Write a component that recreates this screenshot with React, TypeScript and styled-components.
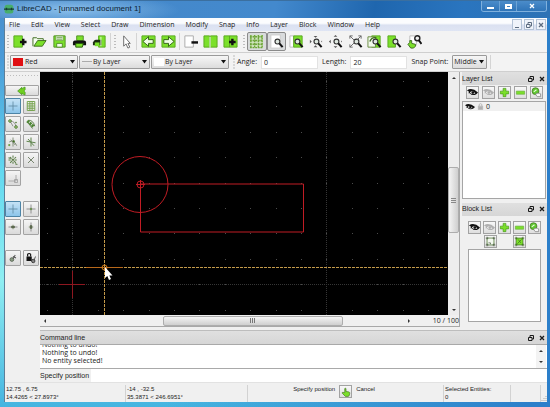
import React from "react";
import styled, { createGlobalStyle, css } from "styled-components";

const GREEN = "#7be02a";
const DARK = "#3d6b1e";
const INK = "#1b1b1b";

const GlobalStyle = createGlobalStyle`
  *, *::before, *::after { box-sizing: border-box; }
  body { margin: 0; }
  button, input, select { font: inherit; color: inherit; margin: 0; padding: 0; }
`;

const Frame = styled.div`
  display: grid;
  grid-template-rows: 18px minmax(0, 1fr);
  min-height: 100vh;
  height: 100vh;
  padding: 0 3px 5px 4px;
  font: 7px/8px "Open Sans", "Noto Sans", sans-serif;
  color: #222;
  background:
    linear-gradient(90deg, transparent 30%, #2c7fca 96%),
    linear-gradient(180deg, #4a8cca 0, #4a9bd8 60px, #62d8f0 170px, #8feef2 280px, #45b4e0 100%);
`;

const TitleBar = styled.header`
  display: flex;
  align-items: stretch;
  margin: 0 -3px 0 -4px;
  padding: 0 3px 0 4px;
  background:
    radial-gradient(ellipse 110px 16px at 70px 9px, rgba(150, 200, 240, 0.85), transparent),
    linear-gradient(100deg, #4688c8 0%, #4389cd 50%, #1f66ae 68%, #2a75bf 84%, #2d72b5 100%);
  border-top: 1px solid #3b6f9f;
`;

const Title = styled.h1`
  display: flex;
  align-items: center;
  gap: 3px;
  flex: 1;
  margin: 0;
  font: 8px/12px "Liberation Sans", Arial, sans-serif;
  color: #0b1c30;
  padding-bottom: 2px;
`;

const CaptionGroup = styled.div`
  display: flex;
  height: 11px;
  border: 1px solid #7fb0dd;
  border-top: 0;
  border-radius: 0 0 3px 3px;
  overflow: hidden;
`;

const CaptionButton = styled.button<{ $wide?: boolean }>`
  display: grid;
  place-items: center;
  width: ${(p) => (p.$wide ? 30 : 17)}px;
  border: 0;
  border-left: 1px solid #6ea4d6;
  background: linear-gradient(#4b8cca, #2f74b8);
  &:first-child { border-left: 0; }
`;

const Body = styled.div`
  display: flex;
  flex-direction: column;
  min-height: 0;
  background: #f0f0f0;
  border-left: 1px solid #5d7f99;
`;

const MenuBar = styled.nav`
  display: flex;
  align-items: center;
  gap: 11px;
  flex: none;
  height: 13px;
  padding: 0 1px 0 4px;
  background: linear-gradient(#fbfcfe 0 40%, #dbe1f1 55%, #dfe5f4);
`;

const MenuLink = styled.a`
  color: #1c1c1c;
  text-decoration: none;
`;

const MdiButtons = styled.div`
  display: flex;
  gap: 2px;
  margin-left: auto;
`;

const MdiButton = styled.button`
  display: grid;
  place-items: center;
  width: 10px;
  height: 11px;
  border: 1px solid #b4c3d6;
  background: #eff3fa;
`;

const ToolBar = styled.div<{ $tall?: boolean }>`
  display: flex;
  align-items: center;
  flex: none;
  height: ${(p) => (p.$tall ? 22 : 19)}px;
  background: #f3f3f3;
  border-bottom: 1px solid #cfcfcf;
`;

const Handle = styled.span<{ $wide?: boolean }>`
  flex: none;
  align-self: stretch;
  width: ${(p) => (p.$wide ? 7 : 5)}px;
  margin: 2px 0;
  background: radial-gradient(circle, #bdbdbd 0 1px, transparent 1px) center / 2px 3px repeat-y;
`;

const Rule = styled.span`
  flex: none;
  align-self: stretch;
  width: 1px;
  margin: 2px 1px;
  background: #d4d4d4;
`;

const ToolGroup = styled.div<{ $w: number }>`
  display: flex;
  flex: 0 1 ${(p) => p.$w}px;
`;

const ToolButton = styled.button<{ $on?: boolean }>`
  display: grid;
  place-items: center;
  flex: 1;
  height: 19px;
  border: 1px solid transparent;
  background: transparent;
  ${(p) =>
    p.$on &&
    css`
      border-color: #8b8b8b;
      border-radius: 2px;
      background: #d9dbdc;
    `}
`;

const Picker = styled.div<{ $w: number }>`
  position: relative;
  flex: 0 1 ${(p) => p.$w}px;
  height: 14px;
  margin-right: 1px;
`;

const PickerSelect = styled.select<{ $indent: number }>`
  appearance: none;
  width: 100%;
  height: 100%;
  padding: 0 9px 1px ${(p) => p.$indent}px;
  border: 1px solid #9a9a9a;
  border-radius: 1px;
  background: linear-gradient(#f6f6f6, #e9e9e9 50%, #dcdcdc);
`;

const PickerArrow = styled.svg`
  position: absolute;
  right: 3px;
  top: 5px;
  pointer-events: none;
`;

const Swatch = styled.span<{ $c: string; $line?: boolean }>`
  position: absolute;
  left: 3px;
  top: ${(p) => (p.$line ? 6 : 3)}px;
  width: 10px;
  height: ${(p) => (p.$line ? 1 : 8)}px;
  background: ${(p) => p.$c};
  pointer-events: none;
`;

const Field = styled.label<{ $gap: number }>`
  display: flex;
  align-items: center;
  gap: ${(p) => p.$gap}px;
  margin-right: 4px;
  white-space: nowrap;
  &:last-of-type { margin-right: 1px; }
`;

const NumberBox = styled.input`
  width: 57px;
  height: 13px;
  padding: 0 2px;
  border: 1px solid #e2e2e2;
  background: #fff;
`;

const Work = styled.div`
  display: flex;
  flex: 1;
  min-height: 0;
`;

const SideBar = styled.aside`
  flex: none;
  width: 35px;
  padding: 2px 1px 0 0;
`;

const SideHandle = styled.div`
  height: 3px;
  margin: 0 1px 8px 2px;
  background: radial-gradient(circle, #bdbdbd 0 1px, transparent 1px) center / 3px 3px repeat-x;
`;

const SideGrid = styled.div`
  display: grid;
  grid-template-columns: 16px 16px;
  gap: 2px;
  margin-bottom: 15px;
`;

const SideButton = styled.button<{ $on?: boolean; $back?: boolean }>`
  display: grid;
  place-items: center;
  height: ${(p) => (p.$back ? 11 : 16)}px;
  grid-column: ${(p) => (p.$back ? "1 / 3" : "auto")};
  border: 1px solid ${(p) => (p.$on ? "#4d84a6" : "#a3a3a3")};
  border-radius: 1px;
  background: ${(p) =>
    p.$on ? "linear-gradient(#c5e2f5, #8cc5ea)" : "linear-gradient(#f5f5f5, #dadada)"};
`;

const Center = styled.div`
  display: flex;
  flex-direction: column;
  flex: 1;
  min-width: 0;
`;

const Upper = styled.div`
  display: flex;
  flex: 1;
  min-height: 0;
`;

const DrawingPane = styled.section`
  display: grid;
  grid-template: minmax(0, 1fr) 11px / minmax(0, 1fr) 11px;
  flex: 1;
  min-width: 0;
  margin-bottom: 3px;
  border-right: 1px solid #a8a8a8;
  border-bottom: 1px solid #a8a8a8;
`;

const Drawing = styled.svg`
  display: block;
  width: 100%;
  height: 100%;
  background: #000;
`;

const VScroll = styled.div`
  display: grid;
  grid-template-rows: 11px 1fr 11px;
  background: #ededed;
  justify-items: center;
  align-items: center;
`;

const VTrack = styled.div`
  display: grid;
  grid-template-rows: 84fr 66fr 71fr;
  width: 100%;
  height: 100%;
`;

const Thumb = styled.div<{ $row?: boolean }>`
  display: grid;
  place-items: center;
  ${(p) => (p.$row ? "grid-column: 2;" : "grid-row: 2;")}
  border: 1px solid #adadad;
  border-radius: 2px;
  background: linear-gradient(${(p) => (p.$row ? "180deg" : "90deg")}, #f4f4f4, #cfcfcf);
`;

const BottomScroll = styled.div`
  display: flex;
  align-items: center;
  grid-column: 1 / 3;
  padding-left: 2px;
  background: #f0f0f0;
`;

const HTrack = styled.div`
  display: grid;
  grid-template-columns: 114fr 181fr 63fr;
  flex: 1;
  height: 10px;
  margin-left: 2px;
`;

const GridStatus = styled.output`
  margin-left: 21px;
`;

const Docks = styled.div`
  display: flex;
  flex-direction: column;
  flex: none;
  width: 87px;
  padding-left: 2px;
`;

const Dock = styled.section<{ $grow: number }>`
  display: flex;
  flex-direction: column;
  flex: ${(p) => p.$grow} 1 0;
  min-height: 0;
  margin-bottom: 4px;
`;

const DockTitle = styled.h2`
  display: flex;
  align-items: center;
  gap: 2px;
  flex: none;
  height: 13px;
  margin: 0;
  padding: 0 1px 0 0;
  font: 7px/8px "Liberation Sans", Arial, sans-serif;
  background: linear-gradient(#e0e0e0, #d6d6d6);
`;

const DockName = styled.span`
  flex: 1;
`;

const DockControl = styled.button`
  display: grid;
  place-items: center;
  width: 9px;
  height: 10px;
  border: 0;
  background: none;
`;

const IconRow = styled.div<{ $gap: number; $top: number }>`
  display: flex;
  justify-content: center;
  flex: none;
  gap: ${(p) => p.$gap}px;
  padding-top: ${(p) => p.$top}px;
`;

const SmallButton = styled.button`
  display: grid;
  place-items: center;
  width: 13px;
  height: 13px;
  border: 1px solid #a2a2a2;
  background: linear-gradient(#f8f8f8, #dedede);
`;

const ListBox = styled.ul<{ $inset?: boolean }>`
  flex: 1;
  margin: ${(p) => (p.$inset ? "1px 6px 4px 6px" : "2px 1px 0 0")};
  padding: 0;
  list-style: none;
  background: #fff;
  border: 1px solid #a5a5a5;
`;

const LayerRow = styled.li`
  display: flex;
  align-items: center;
  gap: 2px;
  height: 9px;
  padding-left: 2px;
  background: #f0f0f0;
`;

const CommandDock = styled.section`
  flex: none;
  border-top: 1px solid #bdbdbd;
`;

const Log = styled.div`
  display: flex;
  align-items: flex-end;
  height: 25px;
  overflow: hidden;
  background: #fff;
  border-top: 1px solid #a9a9a9;
  border-bottom: 1px solid #a9a9a9;
`;

const LogLines = styled.div`
  flex: 1;
  padding: 0 2px 3px;
`;

const LogScroll = styled.div`
  display: flex;
  flex-direction: column;
  justify-content: space-around;
  align-items: center;
  align-self: stretch;
  width: 10px;
  margin-right: 1px;
  background: #f3f3f3;
`;

const Prompt = styled.label`
  display: flex;
  align-items: center;
  height: 13px;
  font: 7px/8px "Liberation Sans", Arial, sans-serif;
`;

const PromptText = styled.span`
  flex: none;
  width: 51px;
  white-space: nowrap;
`;

const CommandInput = styled.input`
  flex: 1;
  min-width: 0;
  height: 13px;
  border: 0;
  background: #fff;
`;

const StatusBar = styled.footer`
  display: flex;
  flex: none;
  height: 20px;
  padding-top: 2px;
  border-top: 1px solid #e2e2e2;
  font: 6px/8px "Liberation Sans", Arial, sans-serif;
`;

const StatusCell = styled.div<{ $w: number; $grow?: boolean }>`
  flex: ${(p) => (p.$grow ? 1 : 0)} 1 ${(p) => p.$w}px;
  padding-left: 1px;
  border-right: 1px solid #d2d2d2;
  white-space: nowrap;
`;

const MouseHints = styled(StatusCell)`
  display: flex;
  justify-content: center;
  gap: 4px;
  padding-right: 24px;
`;

const Grip = styled.svg`
  align-self: flex-end;
  margin-left: auto;
`;

type IconName =
  | "new" | "open" | "save" | "print" | "preview" | "pointer" | "undo" | "redo"
  | "cut" | "copy" | "paste" | "grid" | "draft" | "redraw" | "zoomIn" | "zoomOut"
  | "zoomAuto" | "zoomPrev" | "zoomWin" | "pan" | "back" | "free" | "snapGrid"
  | "ends" | "onEntity" | "centerPt" | "middle" | "dist" | "cross" | "corner"
  | "ortho" | "horiz" | "vert" | "relZero" | "lockZero" | "eye" | "eyeOff" | "plus"
  | "minus" | "edit" | "insert" | "lock" | "hand" | "blockEdit" | "logo";

const page = (x: number, w = 9) => (
  <path d={`M${x} 2h${w}v12h-${w}z`} fill={GREEN} stroke="#59a81e" strokeWidth="1" />
);
const lens = (
  <>
    <circle cx="9" cy="8" r="2.6" fill="#dfe8e0" stroke="#333" strokeWidth="1.2" />
    <path d="M11 10l3.5 4" stroke="#111" strokeWidth="2.2" />
  </>
);
const eyeShape = (c: string) => (
  <>
    <path d="M0 5Q7 0 16 8L14 10Q8 14 4 9L2 9L3 7Z" fill={c} />
    <path d="M4 8Q8 4 12 9Q8 12 4 8Z" fill="#eee" />
    <circle cx="8.500" cy="8" r="2" fill={c} />
  </>
);
const handShape = (
  <path
    d="M6 9V2.500q1-1 2 0V7l5 1q1 .5 1 2l-1 4q-1 1-2 1H7L2 10q-.5-1.500 1-1.500z"
    fill={GREEN}
    stroke={DARK}
    strokeWidth="1"
  />
);

const drawings: Record<IconName, React.ReactNode> = {
  logo: (
    <>
      <rect x="1" y="1" width="14" height="14" rx="4" fill="#48ae6b" />
      <path d="M0 8h16M4 6v4M12 6v4" stroke="#173d35" strokeWidth="2" />
    </>
  ),
  new: <>{page(2)}<path d="M12 5v7M8.500 8.500h7" stroke="#111" strokeWidth="2.6" /></>,
  open: (
    <>
      <path d="M1 13V4h4l1 1h6v3" fill="#f6fff0" stroke={DARK} />
      <path d="M2 13l4-6h9l-4 6z" fill={GREEN} stroke={DARK} />
    </>
  ),
  save: (
    <>
      <path d="M2 2h12v12H2z" fill={GREEN} stroke="#4f8f23" />
      <path d="M4 2h8v5H4z" fill="#e8f5df" stroke="#5a9a2c" strokeWidth=".7" />
      <path d="M5 3.500h6M5 5.500h6" stroke="#6d9a50" />
      <path d="M5 10h6v4H5z" fill="#f3faee" stroke="#4f8f23" />
    </>
  ),
  print: (
    <>
      <path d="M5 2h7v5H5z" fill={GREEN} stroke="#4f8f23" />
      <path d="M1 9q0-2 2-2h10q2 0 2 2v3H1z" fill="#111" />
      <path d="M4 10h8l-1 4H4z" fill={GREEN} stroke="#285b0c" />
    </>
  ),
  preview: (
    <>
      {page(7, 7)}
      <path d="M1 9q1-3 3-3h6v6H1z" fill="#1a2b10" />
      <path d="M3 9h5v4H3z" fill={GREEN} />
      <path d="M9.500 3v10" stroke="#eaffdd" />
    </>
  ),
  pointer: <path d="M5 2v11l2.500-2.500L9.500 15l2-1-2-4H12z" fill="#fff" stroke="#666" />,
  undo: (
    <>
      {page(1, 7)}{page(8, 7)}
      <path d="M2 8l6-5v3h5v4H8v3z" fill="#efffe5" stroke="#325f18" />
    </>
  ),
  redo: (
    <>
      {page(1, 7)}{page(8, 7)}
      <path d="M14 8L8 3v3H3v4h5v3z" fill="#efffe5" stroke="#325f18" />
    </>
  ),
  cut: (
    <>
      <path d="M2 2h9v12H2z" fill="#fff" stroke="#aaa" />
      <path d="M9 9h7" stroke="#111" strokeWidth="2.600" />
    </>
  ),
  copy: (
    <>
      {page(1, 6)}{page(8, 7)}
      <path d="M7.500 3v11" stroke="#eaffdd" strokeWidth="1.200" />
    </>
  ),
  paste: <>{page(1, 6)}{page(7, 8)}<path d="M10 5v7M6.500 8.500h7" stroke="#111" strokeWidth="2.600" /></>,
  grid: (
    <>
      <path d="M1 1h14v14H1z" fill="#cfe3bd" />
      <path d="M2 1v14M6 1v14M10 1v14M14 1v14M1 3h14M1 7h14M1 11h14M1 14.500h14" stroke="#6ea53a" strokeWidth="1.500" strokeDasharray="2 .8" />
    </>
  ),
  draft: <><path d="M2 1h10v14H2z" fill="#fff" stroke="#ccc" />{lens}</>,
  redraw: <><path d="M1 2h4v12H1z" fill="#fff" stroke="#bbb" />{page(5, 9)}{lens}</>,
  zoomIn: (
    <>
      {lens}
      <path d="M8 4l-2-2h4zM8 12l-2 2h4zM4 8L2 6v4zM14 8l1-1v2z" fill="#555" />
    </>
  ),
  zoomOut: (
    <>
      {lens}
      <path d="M8 1L6 3h4zM8 15l-2-2h4zM1 8l2-2v4zM15 8l-1-1v2z" fill="#555" />
    </>
  ),
  zoomAuto: (
    <>
      {lens}
      <path d="M2 5V2h3M11 2h3v3M2 11v3h3M2 2l5 5M14 2l-4 4M2 14l5-5" stroke="#666" fill="none" />
    </>
  ),
  zoomPrev: (
    <>
      {page(5, 9)}
      <path d="M1 3h8v11H1z" fill="#f2faec" stroke="#66893f" />
      {lens}
      <path d="M3 8q2-5 7-4" stroke={DARK} fill="none" strokeWidth="1.500" />
    </>
  ),
  zoomWin: <>{page(1, 8)}{lens}</>,
  pan: (
    <>
      <path d="M3 2h7v10H3z" fill="#fff" stroke="#bbb" />
      <circle cx="11" cy="4.500" r="2.700" fill="#eee" stroke="#222" strokeWidth="1.500" />
      <path d="M12.500 6.500l3 4" stroke="#111" strokeWidth="2" />
      <path d="M3 9v-2h2v3l4 1v2l-2 2H4l-3-4z" fill={GREEN} stroke={DARK} />
    </>
  ),
  back: (
    <path d="M1 8l7-6v3l3-3h2v4l-2 2 2 2v4h-2l-3-3v3z" fill="#6fd020" stroke="#3f8a18" />
  ),
  free: <path d="M8 2v12M2 8h12" stroke="#58839c" />,
  snapGrid: (
    <path d="M3 2h10v12H3zM6.500 2v12M9.500 2v12M3 5h10M3 8h10M3 11h10" fill="none" stroke="#76a34f" strokeWidth="1.300" />
  ),
  ends: (
    <>
      <path d="M4 4q7 0 8 8M4 4l4 7" fill="none" stroke="#777" />
      <circle cx="4" cy="4" r="1.800" fill="#a9cf86" stroke={DARK} />
      <circle cx="12" cy="12" r="1.800" fill="#a9cf86" stroke={DARK} />
      <circle cx="12" cy="6" r="1" fill={DARK} />
    </>
  ),
  onEntity: (
    <>
      <path d="M5 3q6 0 8 8M3 5l7 9" fill="none" stroke="#5d7d4b" strokeWidth="1.300" />
      <path d="M3 4l5 4 4 4" fill="none" stroke="#4e8634" strokeWidth="4" strokeDasharray="3 1" />
    </>
  ),
  centerPt: (
    <>
      <path d="M8 2v12M3 8q6-4 10 5M5 5l6 7" fill="none" stroke="#7a8873" strokeWidth="1.200" />
      <circle cx="3" cy="12" r="1.500" fill="#6b9e45" />
      <circle cx="9" cy="7" r="1.500" fill={DARK} />
    </>
  ),
  middle: <path d="M8 2v12M2 7l12 2M4 4l8 9" stroke="#5c8249" strokeWidth="1.300" />,
  dist: (
    <path d="M8 2v12M2 8h12M4 4l8 8M12 4l-8 8M2 5l3 1M11 13l3 1" stroke="#5b7d45" strokeWidth="1.400" strokeDasharray="3 1" />
  ),
  cross: <path d="M4 4l8 8M12 4l-8 8M7 8h2" stroke="#74836c" strokeWidth="1.300" />,
  corner: <path d="M2 12h10V4M10 10h4v4h-4z" stroke="#999" fill="none" />,
  ortho: <><path d="M8 2v12M2 8h12" stroke="#777" /><circle cx="8" cy="8" r="1.600" fill="#6f8f58" /></>,
  horiz: <><path d="M2 8h12" stroke="#777" /><path d="M8 5v6M6 7h4v2H6z" stroke="#667754" /></>,
  vert: <><path d="M8 2v12" stroke="#777" /><path d="M5 8h6M7 6h2v4H7z" stroke="#667754" /></>,
  relZero: (
    <>
      <circle cx="6.500" cy="10" r="2.500" fill="#8a9a84" stroke="#4b5a45" />
      <path d="M8 9l3-5M8 6l4 2" stroke="#555" strokeWidth="1.400" />
    </>
  ),
  lockZero: (
    <>
      <path d="M2 6h7v6H2z" fill="#111" />
      <path d="M3.500 6V3q2-2 4 0v3" fill="none" stroke="#111" strokeWidth="1.500" />
      <circle cx="11" cy="12" r="2.300" fill="#888" stroke="#222" />
      <path d="M12 11l2-5" stroke="#333" />
    </>
  ),
  eye: eyeShape("#111"),
  eyeOff: eyeShape("#b0b0b0"),
  plus: <path d="M6 2h4v4h4v4h-4v4H6v-4H2V6h4z" fill={GREEN} stroke="#48981a" />,
  minus: <path d="M2 6h12v4.500H2z" fill={GREEN} stroke="#6caf40" />,
  edit: (
    <>
      <circle cx="6.500" cy="6" r="5" fill="#61c832" stroke={DARK} />
      <path d="M4 7l4-3" stroke="#eaffdd" strokeWidth="1.500" />
      <path d="M8 9h4l2 1v4H9l-2-3z" fill="#f7f7f7" stroke="#777" />
    </>
  ),
  insert: (
    <>
      <path d="M3 3h10v10H3z" fill={GREEN} stroke={DARK} />
      <path d="M1 3h4M3 1v4M11 3h4M13 1v4M1 13h4M3 11v4M11 13h4M13 11v4M5 11l6-6M6 5l4 5" stroke={DARK} />
    </>
  ),
  blockEdit: (
    <>
      <path d="M3 3h10v10H3z" fill="#f4f8f1" stroke={DARK} />
      <path d="M1 3h4M3 1v4M11 3h4M13 1v4M1 13h4M3 11v4M11 13h4M13 11v4M5 10h3v2" stroke="#45553e" fill="none" />
    </>
  ),
  lock: (
    <>
      <path d="M3 7h10v8H3z" fill="#ccc" stroke="#999" />
      <path d="M5 7V3q3-3 6 0v4M4 10h8M4 12.500h8" fill="none" stroke="#999" strokeWidth="1.300" />
    </>
  ),
  hand: handShape,
};

const Icon = ({ name, size = 14 }: { name: IconName; size?: number }) => (
  <svg width={size} height={size} viewBox="0 0 16 16" fill={INK} aria-hidden="true">
    {drawings[name]}
  </svg>
);

const Triangle = ({ dir }: { dir: "up" | "down" | "left" | "right" }) => {
  const shape = { up: "M1 4h4L3 2z", down: "M1 2h4L3 4z", left: "M4 1v4L2 3z", right: "M2 1v4l2-2z" };
  return (
    <svg width="6" height="6" viewBox="0 0 6 6" aria-hidden="true">
      <path d={shape[dir]} fill="#333" />
    </svg>
  );
};

const RestoreGlyph = ({ color = INK }: { color?: string }) => (
  <svg width="6" height="6" viewBox="0 0 6 6" aria-hidden="true">
    <path d="M2 2V.500h3.500V4H4M.500 2.500H4v3H.500z" fill="none" stroke={color} />
  </svg>
);

const CloseGlyph = ({ color = INK }: { color?: string }) => (
  <svg width="6" height="6" viewBox="0 0 6 6" aria-hidden="true">
    <path d="M1 1l4 4M5 1L1 5" stroke={color} strokeWidth="1.300" />
  </svg>
);

const ToolSet = ({ items, width, on = [] }: { items: [IconName, string][]; width: number; on?: IconName[] }) => (
  <ToolGroup $w={width}>
    {items.map(([icon, label]) => (
      <ToolButton key={icon} type="button" aria-label={label} $on={on.includes(icon)}>
        <Icon name={icon} size={15} />
      </ToolButton>
    ))}
  </ToolGroup>
);

const Choice = ({ label, value, width, indent, children }: {
  label: string; value: string; width: number; indent: number; children?: React.ReactNode;
}) => (
  <Picker $w={width}>
    <PickerSelect aria-label={label} $indent={indent}>
      <option>{value}</option>
    </PickerSelect>
    {children}
    <PickerArrow width="5" height="4" viewBox="0 0 5 4">
      <path d="M0 0h5L2.500 3.500z" fill="#111" />
    </PickerArrow>
  </Picker>
);

const SideSet = ({ items, on, back }: { items: [IconName, string][]; on?: IconName; back?: boolean }) => (
  <SideGrid>
    {back && (
      <SideButton type="button" aria-label="Back" $back>
        <Icon name="back" size={10} />
      </SideButton>
    )}
    {items.map(([icon, label]) => (
      <SideButton key={label} type="button" aria-label={label} $on={on === icon}>
        <Icon name={icon} size={12} />
      </SideButton>
    ))}
  </SideGrid>
);

const DockHeader = ({ name }: { name: string }) => (
  <DockTitle>
    <DockName>{name}</DockName>
    <DockControl type="button" aria-label={`Float ${name}`}><RestoreGlyph /></DockControl>
    <DockControl type="button" aria-label={`Close ${name}`}><CloseGlyph /></DockControl>
  </DockTitle>
);

const ListActions = ({ gap, top }: { gap: number; top: number }) => (
  <IconRow $gap={gap} $top={top}>
    {(["eye", "eyeOff", "plus", "minus", "edit"] as IconName[]).map((n) => (
      <SmallButton key={n} type="button" aria-label={n}><Icon name={n} size={11} /></SmallButton>
    ))}
  </IconRow>
);

const gridPoints = Array.from({ length: 16 }, (_, c) =>
  Array.from({ length: 10 }, (_, r) => [7 + c * 25.4, 9 + r * 25.4]),
).flat();

const DrawingView = () => (
  <Drawing role="img" aria-label="Drawing">
    {gridPoints.map(([x, y]) => (
      <rect key={`${x}-${y}`} x={Math.round(x)} y={Math.round(y)} width="1" height="1" fill="#4c4c4c" />
    ))}
    <g stroke="#363636" strokeDasharray="1 1">
      <path d="M32.500 0V1000M286.500 0V1000M0 212.500H2000" />
    </g>
    <g fill="none" stroke="#c01c24">
      <circle cx="100" cy="112.500" r="28" />
      <circle cx="100.500" cy="112.500" r="3.500" />
      <path d="M96 112.500h9M100.500 108v9" />
      <path d="M100.500 112h163v48h-163z" />
    </g>
    <path d="M19 212.500h26M32.500 199v27" stroke="#8d1720" />
    <path d="M64.500 0V1000M0 195.500H2000" stroke="#c39a4a" strokeDasharray="3 1" />
    <path d="M46 195.500h37" stroke="#b8681a" />
    <circle cx="64.500" cy="195.500" r="2.500" fill="none" stroke="#d6801c" />
    <path d="M65 195v11l2.300-2 1.700 4 2-1-1.700-3.500H72.500z" fill="#fff" />
  </Drawing>
);

const menus = ["File", "Edit", "View", "Select", "Draw", "Dimension", "Modify", "Snap", "Info", "Layer", "Block", "Window", "Help"];

export default function App() {
  return (
    <>
      <GlobalStyle />
      <Frame>
        <TitleBar>
          <Title><Icon name="logo" size={10} />LibreCAD - [unnamed document 1]</Title>
          <CaptionGroup>
            <CaptionButton type="button" aria-label="Minimize">
              <svg width="7" height="7"><path d="M0 4h7v2H0z" fill="#fff" /></svg>
            </CaptionButton>
            <CaptionButton type="button" aria-label="Maximize">
              <svg width="7" height="7"><path d="M1 2h5v3H1z" fill="none" stroke="#fff" strokeWidth="2" /></svg>
            </CaptionButton>
            <CaptionButton type="button" aria-label="Close" $wide>
              <CloseGlyph color="#fff" />
            </CaptionButton>
          </CaptionGroup>
        </TitleBar>
        <Body>
          <MenuBar>
            {menus.map((m) => <MenuLink key={m} href={`#${m}`}>{m}</MenuLink>)}
            <MdiButtons>
              <MdiButton type="button" aria-label="Minimize document">
                <svg width="6" height="6"><path d="M1 5.500h4" stroke="#5d6c80" /></svg>
              </MdiButton>
              <MdiButton type="button" aria-label="Restore document"><RestoreGlyph color="#5d6c80" /></MdiButton>
              <MdiButton type="button" aria-label="Close document"><CloseGlyph color="#5d6c80" /></MdiButton>
            </MdiButtons>
          </MenuBar>
          <ToolBar $tall>
            <Handle />
            <ToolSet width={99} items={[["new", "New"], ["open", "Open"], ["save", "Save"], ["print", "Print"], ["preview", "Print preview"]]} />
            <Rule />
            <Handle />
            <ToolSet width={18} items={[["pointer", "Select"]]} />
            <Rule />
            <ToolSet width={40} items={[["undo", "Undo"], ["redo", "Redo"]]} />
            <Rule />
            <ToolSet width={59} items={[["cut", "Cut"], ["copy", "Copy"], ["paste", "Paste"]]} />
            <Handle $wide />
            <ToolSet
              width={177}
              on={["grid", "draft"]}
              items={[["grid", "Grid"], ["draft", "Draft"], ["redraw", "Redraw"], ["zoomIn", "Zoom in"], ["zoomOut", "Zoom out"], ["zoomAuto", "Auto zoom"], ["zoomPrev", "Previous view"], ["zoomWin", "Window zoom"], ["pan", "Pan"]]}
            />
          </ToolBar>
          <ToolBar>
            <Handle />
            <Choice label="Color" value="Red" width={68} indent={14}><Swatch $c="#e00f12" /></Choice>
            <Choice label="Width" value="By Layer" width={71} indent={13}><Swatch $c="#aaa" $line /></Choice>
            <Choice label="Line type" value="By Layer" width={78} indent={13}><Swatch $c="#fff" /></Choice>
            <Handle $wide />
            <Field $gap={4}>Angle:<NumberBox defaultValue="0" /></Field>
            <Field $gap={4}>Length:<NumberBox defaultValue="20" /></Field>
            <Field $gap={4}>
              Snap Point:
              <Choice label="Snap Point" value="Middle" width={36} indent={1} />
            </Field>
            <Rule />
          </ToolBar>
          <Work>
            <SideBar>
              <SideHandle />
              <SideSet
                back
                on="free"
                items={[["free", "Free snap"], ["snapGrid", "Snap on grid"], ["ends", "Snap on endpoints"], ["onEntity", "Snap on entity"], ["centerPt", "Snap center"], ["middle", "Snap middle"], ["dist", "Snap distance"], ["cross", "Snap intersection"], ["corner", "Snap manually"]]}
              />
              <SideSet
                on="free"
                items={[["free", "No restriction"], ["ortho", "Restrict orthogonal"], ["horiz", "Restrict horizontal"], ["vert", "Restrict vertical"]]}
              />
              <SideSet items={[["relZero", "Set relative zero"], ["lockZero", "Lock relative zero"]]} />
            </SideBar>
            <Center>
              <Upper>
                <DrawingPane>
                  <DrawingView />
                  <VScroll>
                    <Triangle dir="up" />
                    <VTrack>
                      <Thumb><svg width="5" height="6"><path d="M0 1.500h5M0 3.500h5M0 5.500h5" stroke="#888" /></svg></Thumb>
                    </VTrack>
                    <Triangle dir="down" />
                  </VScroll>
                  <BottomScroll>
                    <Triangle dir="left" />
                    <HTrack>
                      <Thumb $row><svg width="6" height="5"><path d="M.500 0v5M2.500 0v5M4.500 0v5" stroke="#777" /></svg></Thumb>
                    </HTrack>
                    <Triangle dir="right" />
                    <GridStatus>10 / 100</GridStatus>
                  </BottomScroll>
                </DrawingPane>
                <Docks>
                  <Dock $grow={127}>
                    <DockHeader name="Layer List" />
                    <ListActions gap={3} top={1} />
                    <ListBox>
                      <LayerRow><Icon name="eye" size={10} /><Icon name="lock" size={7} />0</LayerRow>
                    </ListBox>
                  </Dock>
                  <Dock $grow={124}>
                    <DockHeader name="Block List" />
                    <ListActions gap={2} top={5} />
                    <IconRow $gap={16} $top={1}>
                      <SmallButton type="button" aria-label="Edit block"><Icon name="blockEdit" size={11} /></SmallButton>
                      <SmallButton type="button" aria-label="Insert block"><Icon name="insert" size={11} /></SmallButton>
                    </IconRow>
                    <ListBox $inset />
                  </Dock>
                </Docks>
              </Upper>
              <CommandDock>
                <DockHeader name="Command line" />
                <Log>
                  <LogLines>
                    <div>Nothing to undo!</div>
                    <div>Nothing to undo!</div>
                    <div>No entity selected!</div>
                  </LogLines>
                  <LogScroll><Triangle dir="up" /><Triangle dir="down" /></LogScroll>
                </Log>
                <Prompt>
                  <PromptText>Specify position</PromptText>
                  <CommandInput />
                </Prompt>
              </CommandDock>
            </Center>
          </Work>
          <StatusBar>
            <StatusCell $w={121}>12.75 , 6.75<br />14.4265 &lt; 27.8973°</StatusCell>
            <StatusCell $w={122}>-14 , -32.5<br />35.3871 &lt; 246.6951°</StatusCell>
            <MouseHints $w={195} $grow>
              <span>Specify position</span>
              <SmallButton as="span"><Icon name="hand" size={10} /></SmallButton>
              <span>Cancel</span>
            </MouseHints>
            <StatusCell $w={67}>Selected Entities:<br />0</StatusCell>
            <StatusCell $w={30} />
            <Grip width="6" height="6"><path d="M5 0v1M5 2v1M3 2v1M5 4v1M3 4v1M1 4v1" stroke="#aaa" /></Grip>
          </StatusBar>
        </Body>
      </Frame>
    </>
  );
}
